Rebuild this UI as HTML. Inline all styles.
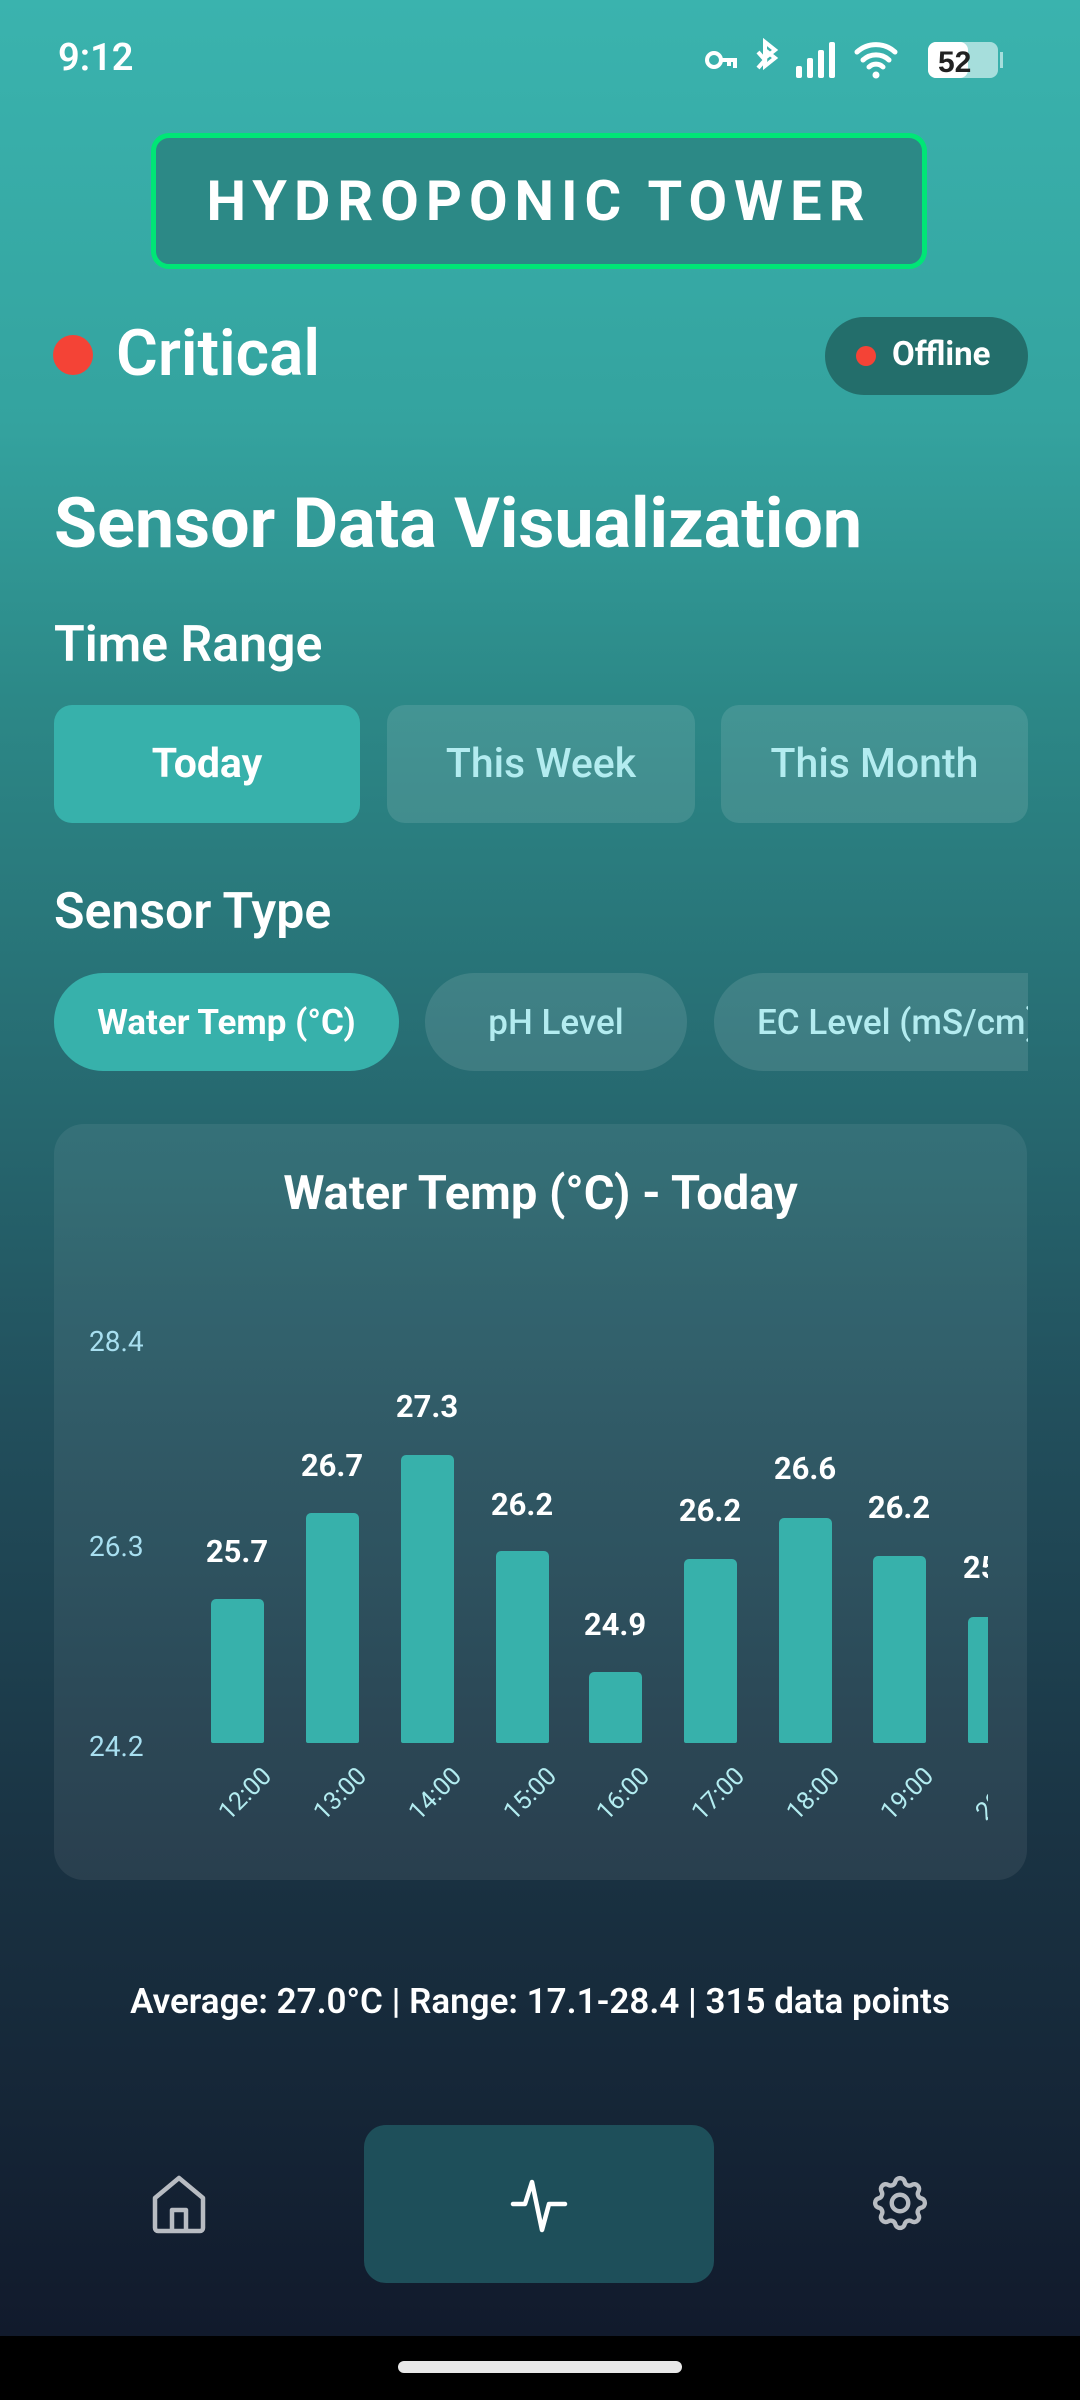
<!DOCTYPE html>
<html><head><meta charset="utf-8"><style>
*{margin:0;padding:0;box-sizing:border-box}
html,body{width:1080px;height:2400px;overflow:hidden;background:#000}
body{font-family:"Roboto","Liberation Sans",sans-serif;color:#fff;position:relative}
#bg{position:absolute;left:0;top:0;width:1080px;height:2336px;background:linear-gradient(180deg,#3ab3ae 0%,#34a39f 18%,#2c8887 30%,#276d73 45%,#22505d 60%,#1a3444 78%,#111a2c 100%)}
.a{position:absolute}
.btn{position:absolute;top:705px;height:118px;border-radius:18px;display:flex;align-items:center;justify-content:center;font-size:41px;font-weight:500;color:#b3ecf0;background:rgba(255,255,255,0.11)}
.chip{position:absolute;top:973px;height:98px;border-radius:49px;display:flex;align-items:center;justify-content:center;font-size:35px;font-weight:500;color:#b3ecf0;background:rgba(255,255,255,0.11);white-space:nowrap;overflow:hidden}
.bar{position:absolute;width:53px;background:#37b1ab;border-radius:5px 5px 2px 2px}
.v{position:absolute;width:120px;text-align:center;font-size:31px;font-weight:700}
.yl{position:absolute;left:89px;font-size:28px;color:#a8dff0}
.xl{position:absolute;font-size:25px;color:#b3ecf0;transform:rotate(-45deg);transform-origin:right top;white-space:nowrap}
</style></head><body>
<div id="bg"></div>
<div class="a" style="left:58px;top:36px;font-size:38px;font-weight:600">9:12</div>
<svg class="a" style="left:700px;top:38px" width="310" height="44" viewBox="0 0 310 44">
 <g fill="none" stroke="#fff" stroke-width="4"><circle cx="14" cy="22" r="7"/><path d="M21 22h14v8M29 22v6"/><path d="M65 12l10 8-10 8V4l10 8-10 8M58 14l7 8-7 8"/></g>
 <g fill="#fff"><rect x="96" y="28" width="6" height="12" rx="2"/><rect x="107" y="20" width="6" height="20" rx="2"/><rect x="118" y="12" width="6" height="28" rx="2"/><rect x="129" y="4" width="6" height="36" rx="2"/></g>
 <path d="M157 14a28 28 0 0 1 38 0M163 22a19 19 0 0 1 26 0M169 29a10 10 0 0 1 14 0" stroke="#fff" stroke-width="5" fill="none" stroke-linecap="round"/><circle cx="176" cy="37" r="3.5" fill="#fff"/>
 <rect x="228" y="4" width="70" height="36" rx="8" fill="#a6dedc"/><rect x="228" y="4" width="40" height="36" rx="8" fill="#fff"/><rect x="300" y="14" width="3" height="16" fill="#a6dedc"/>
 <text x="238" y="34" font-family="Liberation Sans" font-weight="700" font-size="30" fill="#222">52</text>
</svg>
<div class="a" style="left:151px;top:133px;width:776px;height:136px;border:5px solid #00e676;border-radius:18px;background:#2c8986;display:flex;align-items:center;justify-content:center;font-size:56px;font-weight:700;letter-spacing:7px">HYDROPONIC TOWER</div>
<div class="a" style="left:53px;top:335px;width:40px;height:40px;border-radius:50%;background:#f44336"></div>
<div class="a" style="left:116px;top:316px;font-size:64px;font-weight:600">Critical</div>
<div class="a" style="left:825px;top:317px;width:203px;height:78px;border-radius:39px;background:#236e6b"></div>
<div class="a" style="left:856px;top:346px;width:20px;height:20px;border-radius:50%;background:#f44336"></div>
<div class="a" style="left:892px;top:335px;font-size:33px;font-weight:700">Offline</div>
<div class="a" style="left:54px;top:483px;font-size:70px;font-weight:700">Sensor Data Visualization</div>
<div class="a" style="left:54px;top:616px;font-size:50px;font-weight:600">Time Range</div>
<div class="btn" style="left:54px;width:306px;background:#37b1ab;color:#fff;font-weight:700">Today</div>
<div class="btn" style="left:387px;width:308px">This Week</div>
<div class="btn" style="left:721px;width:307px">This Month</div>
<div class="a" style="left:54px;top:883px;font-size:50px;font-weight:600">Sensor Type</div>
<div class="chip" style="left:54px;width:345px;background:#37b1ab;color:#fff;font-weight:700">Water Temp (°C)</div>
<div class="chip" style="left:425px;width:262px">pH Level</div>
<div class="chip" style="left:714px;width:314px;border-radius:49px 0 0 49px;justify-content:flex-start;padding-left:43px">EC Level (mS/cm)</div>
<div class="a" style="left:54px;top:1124px;width:973px;height:756px;border-radius:30px;background:rgba(255,255,255,0.07)"></div>
<div class="a" style="left:54px;top:1166px;width:973px;text-align:center;font-size:47px;font-weight:700">Water Temp (°C) - Today</div>
<div class="yl" style="top:1325px">28.4</div>
<div class="yl" style="top:1530px">26.3</div>
<div class="yl" style="top:1730px">24.2</div>
<div class="a" style="left:0;top:0;width:988px;height:1900px;overflow:hidden">
<div class="bar" style="left:211px;top:1599px;height:144px"></div>
<div class="bar" style="left:306px;top:1513px;height:230px"></div>
<div class="bar" style="left:401px;top:1455px;height:288px"></div>
<div class="bar" style="left:496px;top:1551px;height:192px"></div>
<div class="bar" style="left:589px;top:1672px;height:71px"></div>
<div class="bar" style="left:684px;top:1559px;height:184px"></div>
<div class="bar" style="left:779px;top:1518px;height:225px"></div>
<div class="bar" style="left:873px;top:1556px;height:187px"></div>
<div class="bar" style="left:968px;top:1617px;height:126px"></div>
<div class="v" style="left:177px;top:1533px">25.7</div>
<div class="v" style="left:272px;top:1447px">26.7</div>
<div class="v" style="left:367px;top:1388px">27.3</div>
<div class="v" style="left:462px;top:1486px">26.2</div>
<div class="v" style="left:555px;top:1606px">24.9</div>
<div class="v" style="left:650px;top:1492px">26.2</div>
<div class="v" style="left:745px;top:1450px">26.6</div>
<div class="v" style="left:839px;top:1489px">26.2</div>
<div class="v" style="left:934px;top:1549px">25.8</div>
<div class="xl" style="right:731px;top:1762px">12:00</div>
<div class="xl" style="right:636px;top:1762px">13:00</div>
<div class="xl" style="right:541px;top:1762px">14:00</div>
<div class="xl" style="right:446px;top:1762px">15:00</div>
<div class="xl" style="right:353px;top:1762px">16:00</div>
<div class="xl" style="right:258px;top:1762px">17:00</div>
<div class="xl" style="right:163px;top:1762px">18:00</div>
<div class="xl" style="right:69px;top:1762px">19:00</div>
<div class="xl" style="right:-26px;top:1762px">20:00</div>
</div>
<div class="a" style="left:0;top:1981px;width:1080px;text-align:center;font-size:35px;font-weight:600">Average: 27.0°C | Range: 17.1-28.4 | 315 data points</div>
<div class="a" style="left:364px;top:2125px;width:350px;height:158px;border-radius:22px;background:#1e4f5a"></div>
<svg class="a" style="left:149px;top:2173px" width="60" height="62" viewBox="0 0 60 62"><path d="M6 55V25L30 5l24 20v30a3 3 0 0 1-3 3H9a3 3 0 0 1-3-3z M23 58V37h14v21" fill="none" stroke="#b8bcc2" stroke-width="4.5" stroke-linejoin="round"/></svg>
<svg class="a" style="left:509px;top:2178px" width="60" height="56" viewBox="0 0 60 56"><path d="M4 26h12L23 4l10 48 7-26h16" fill="none" stroke="#fff" stroke-width="4.5" stroke-linejoin="round" stroke-linecap="round"/></svg>
<svg class="a" style="left:867px;top:2170px" width="66" height="66" viewBox="0 0 24 24"><path d="M10.3 4.3c.4-1.8 3-1.8 3.4 0a1.7 1.7 0 0 0 2.6 1.1c1.5-.9 3.3.8 2.4 2.4a1.7 1.7 0 0 0 1 2.5c1.8.4 1.8 3 0 3.4a1.7 1.7 0 0 0-1 2.6c.9 1.5-.9 3.3-2.4 2.4a1.7 1.7 0 0 0-2.6 1c-.4 1.8-3 1.8-3.4 0a1.7 1.7 0 0 0-2.6-1c-1.5.9-3.3-.9-2.4-2.4a1.7 1.7 0 0 0-1-2.6c-1.8-.4-1.8-3 0-3.4a1.7 1.7 0 0 0 1-2.5c-.9-1.6.9-3.3 2.4-2.4 1 .6 2.3.1 2.6-1.1z" fill="none" stroke="#b8bcc2" stroke-width="1.6"/><circle cx="12" cy="12" r="3" fill="none" stroke="#b8bcc2" stroke-width="1.6"/></svg>
<div class="a" style="left:398px;top:2361px;width:284px;height:12px;border-radius:6px;background:#e8e8e8"></div>
</body></html>
